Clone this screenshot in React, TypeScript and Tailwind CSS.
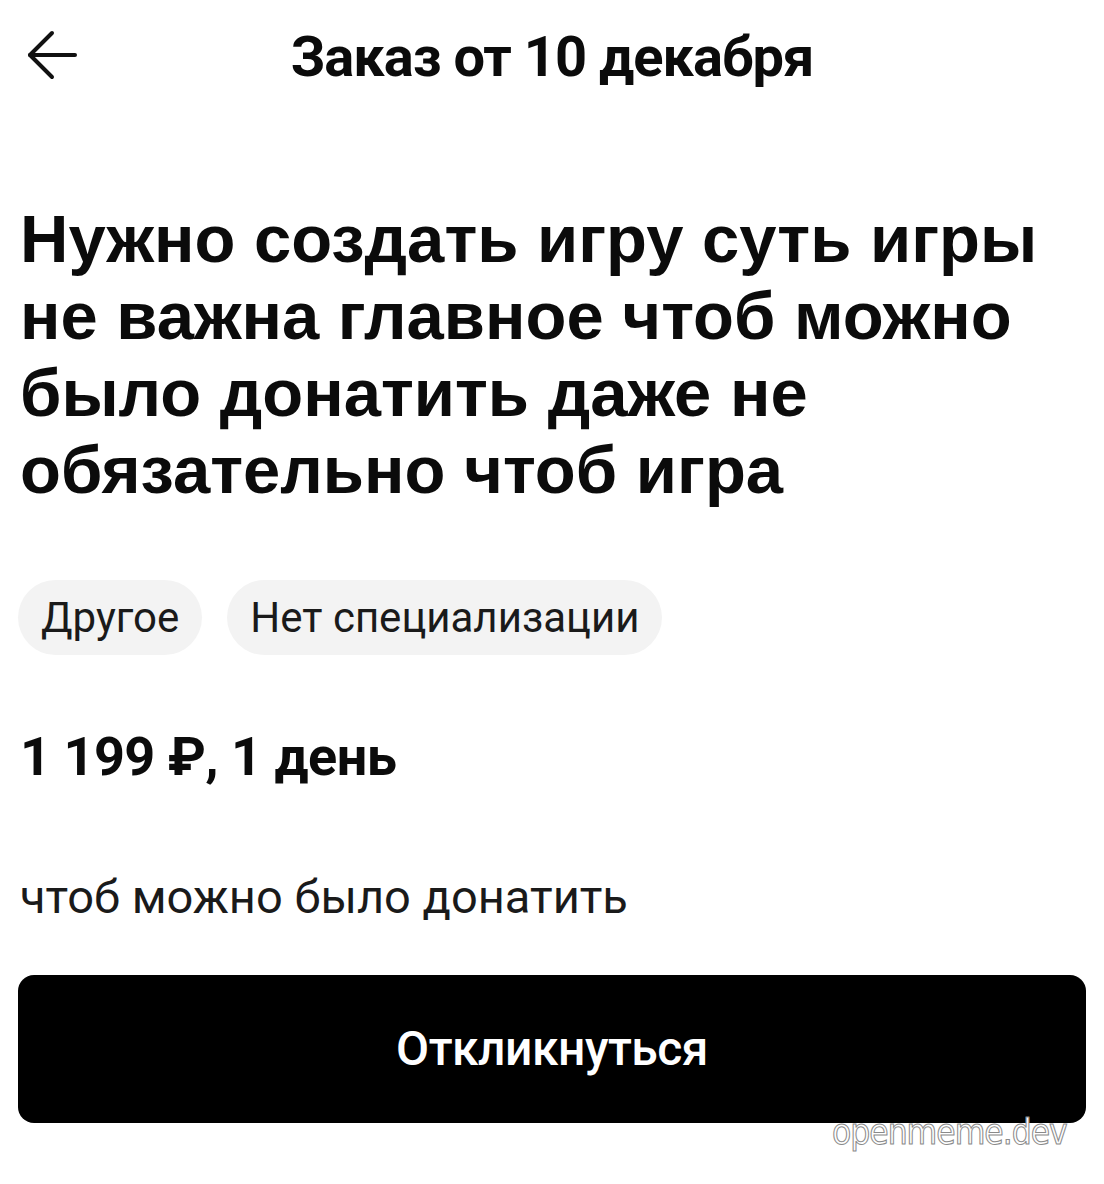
import React from 'react'

const tags = ['Другое', 'Нет специализации']

function BackArrow() {
  return (
    <svg width="54" height="54" viewBox="0 0 54 54" fill="none" stroke="#111" strokeWidth="4" strokeLinecap="round" strokeLinejoin="round">
      <path d="M50 26H5" />
      <path d="M27 4L5 26L27 48" />
    </svg>
  )
}

export default function App() {
  return (
    <main className="relative w-[1104px] h-[1184px] bg-white text-[#0b0b0b] overflow-hidden font-['Roboto','Noto_Sans',sans-serif]">
      {/* шапка */}
      <header className="relative flex items-center justify-center h-[116px]">
        <button className="absolute left-[25px] top-[29px]">
          <BackArrow />
        </button>
        <h1 className="text-[56px] font-bold tracking-[-1px] leading-none -mt-[2px]">Заказ от 10 декабря</h1>
      </header>

      <section className="px-[20px] pt-[84px]">
        <h2 className="font-['Liberation_Sans','Arial',sans-serif] font-bold text-[67px] leading-[77px]">
          Нужно создать игру суть игры не важна главное чтоб можно было донатить даже не обязательно чтоб игра
        </h2>

        <div className="flex gap-[25px] mt-[72px] -ml-[2px]">
          {tags.map((t) => (
            <span key={t} className="h-[75px] px-[23px] flex items-center rounded-full bg-[#f3f3f3] text-[42px] text-[#1a1a1a]">
              {t}
            </span>
          ))}
        </div>

        <p className="mt-[75px] text-[54px] font-bold leading-none tracking-[-0.5px]">1 199 ₽, 1 день</p>

        <p className="mt-[89px] text-[47px] leading-none text-[#1a1a1a]">чтоб можно было донатить</p>
      </section>

      <div className="px-[18px] mt-[55px]">
        <button className="w-full h-[148px] rounded-[16px] bg-black text-white text-[48px] font-medium tracking-[-0.5px]">
          Откликнуться
        </button>
      </div>

      <span className="absolute left-[832px] top-[1106px] text-[35px] text-white tracking-[-1px] font-['DejaVu_Sans_Condensed','Liberation_Sans',sans-serif] [-webkit-text-stroke:1px_#8a8a8a]">
        openmeme.dev
      </span>
    </main>
  )
}
